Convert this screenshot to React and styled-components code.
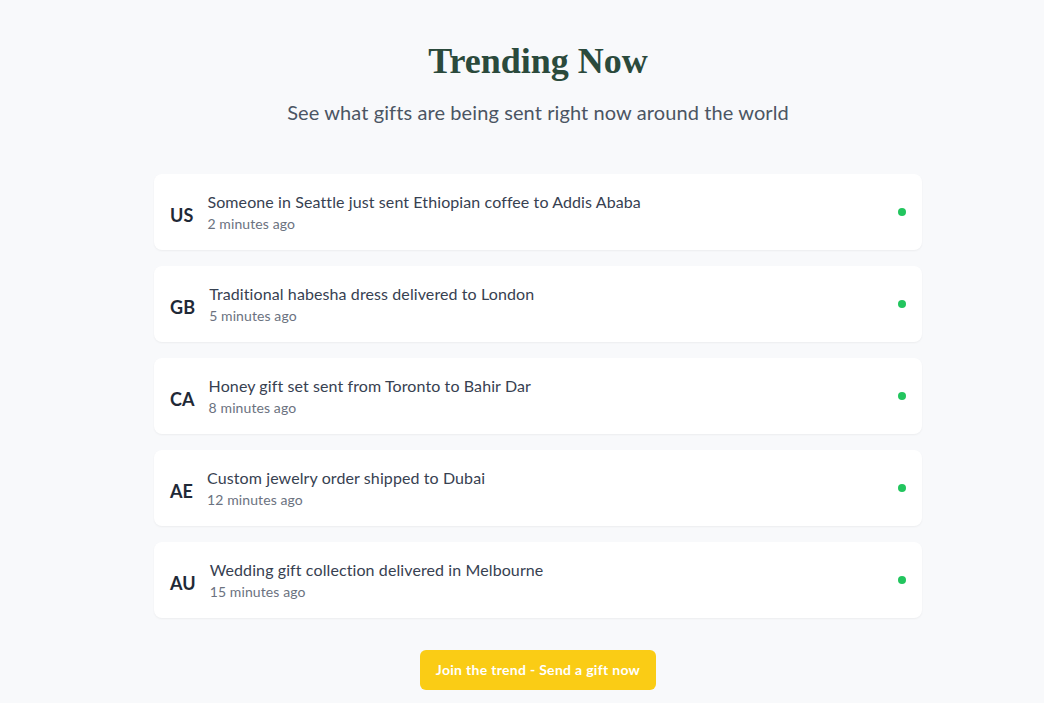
import styled, { createGlobalStyle } from "styled-components"

const GlobalStyle = createGlobalStyle`
    body{
        margin: 0;
        background: #f8f9fb;
        font-family: Lato, "Noto Sans", sans-serif;
        letter-spacing: 0.1px;
    }
`

const StyledSection = styled.section`
    padding: 41px 0 13px 32px;
    display: flex;
    flex-direction: column;
    align-items: center;
`

const Title = styled.h2`
    margin: 0 0 17px;
    font-family: "Liberation Serif", serif;
    font-size: 36px;
    line-height: 40px;
    font-weight: 700;
    letter-spacing: 0;
    color: #2b4a3c;
`

const Subtitle = styled.p`
    margin: 0 0 48px;
    font-size: 20px;
    line-height: 28px;
    color: #4b5563;
`

const List = styled.div`
    width: 768px;
    display: flex;
    flex-direction: column;
    gap: 16px;
`

const Card = styled.div`
    display: flex;
    align-items: center;
    gap: 14px;
    padding: 16px;
    background: #fff;
    border-radius: 8px;
    box-shadow: 0 1px 2px rgba(0, 0, 0, 0.05);
`

const Flag = styled.span`
    font-size: 18px;
    font-weight: 700;
    color: #1f2937;
    margin-top: 6px;
`

const Info = styled.div`
    flex: 1;
    p{
        margin: 0;
        font-size: 16px;
        line-height: 24px;
        color: #374151;
    }
    span{
        display: block;
        font-size: 14px;
        line-height: 20px;
        color: #6b7280;
    }
`

const Dot = styled.span`
    width: 8px;
    height: 8px;
    border-radius: 50%;
    background: #22c55e;
`

const Button = styled.button`
    margin-top: 32px;
    padding: 10px 16px;
    border: none;
    border-radius: 6px;
    background: #facc15;
    color: #fff;
    font-family: inherit;
    font-size: 14px;
    line-height: 20px;
    font-weight: 700;
    letter-spacing: 0.3px;
    cursor: pointer;
`

const items = [
    { flag: "US", text: "Someone in Seattle just sent Ethiopian coffee to Addis Ababa", time: "2 minutes ago" },
    { flag: "GB", text: "Traditional habesha dress delivered to London", time: "5 minutes ago" },
    { flag: "CA", text: "Honey gift set sent from Toronto to Bahir Dar", time: "8 minutes ago" },
    { flag: "AE", text: "Custom jewelry order shipped to Dubai", time: "12 minutes ago" },
    { flag: "AU", text: "Wedding gift collection delivered in Melbourne", time: "15 minutes ago" },
]

export default function App(){
    return (
        <>
            <GlobalStyle/>
            <StyledSection>
                <Title>Trending Now</Title>
                <Subtitle>See what gifts are being sent right now around the world</Subtitle>
                <List>
                    {items.map((item)=>(
                        <Card key={item.flag}>
                            <Flag>{item.flag}</Flag>
                            <Info>
                                <p>{item.text}</p>
                                <span>{item.time}</span>
                            </Info>
                            <Dot/>
                        </Card>
                    ))}
                </List>
                <Button>Join the trend - Send a gift now</Button>
            </StyledSection>
        </>
    )
}
